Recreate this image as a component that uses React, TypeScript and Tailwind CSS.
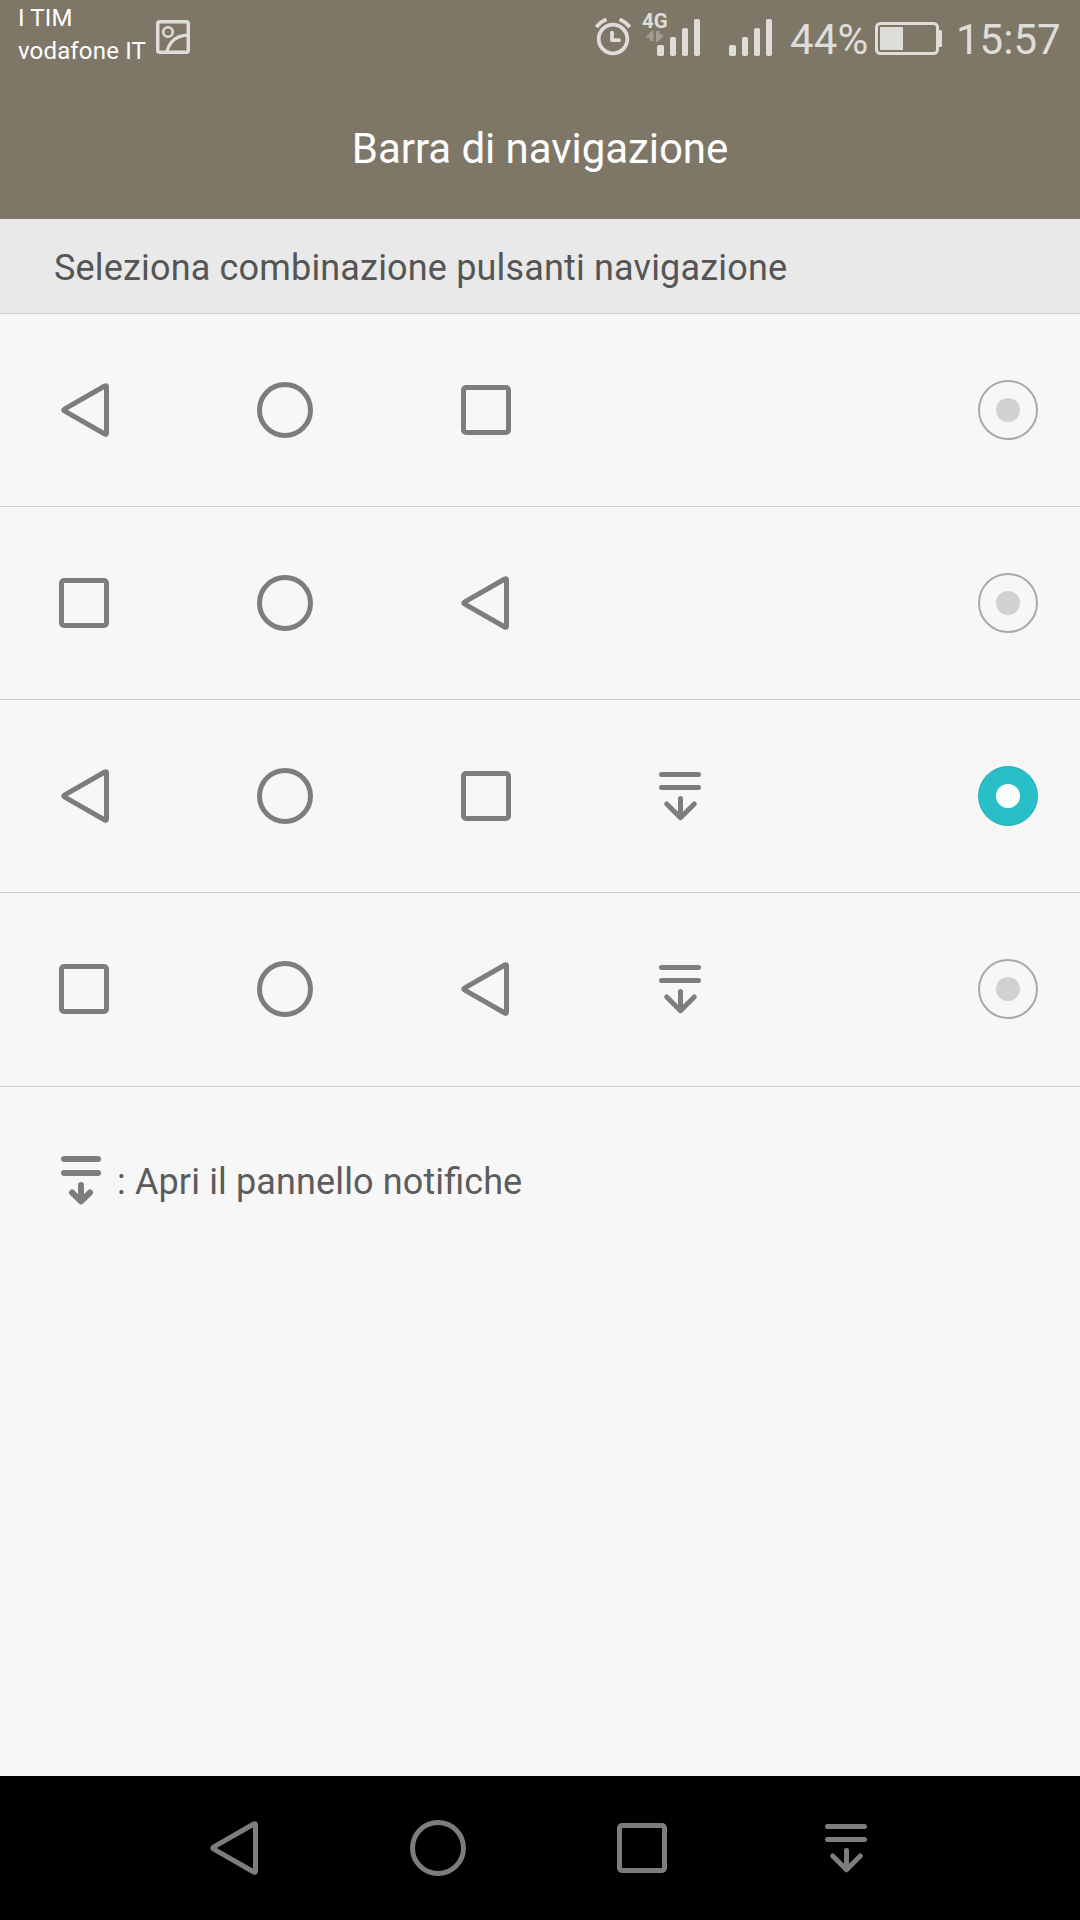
import React from "react";

type IconKind = "back" | "home" | "recent" | "panel";

function NavIcon({ kind }: { kind: IconKind }) {
  return (
    <svg
      width="56"
      height="56"
      viewBox="0 0 56 56"
      fill="none"
      stroke="#7d7d7d"
      strokeWidth="5"
      strokeLinecap="round"
      strokeLinejoin="round"
      className="shrink-0"
    >
      {kind === "back" && <path d="M49.5 4.8Q49.5 3 47.8 4L7.8 26.9Q5.6 28 7.8 29.1L47.8 52Q49.5 53 49.5 51.2Z" />}
      {kind === "home" && <circle cx="28" cy="28" r="25.5" />}
      {kind === "recent" && <path d="M4 8a5 5 0 0 1 5-5h40a5 5 0 0 1 5 5v40a5 5 0 0 1-5 5h-40a5 5 0 0 1-5-5zM9 8v40h40v-40z" fill="#7d7d7d" fillRule="evenodd" stroke="none" />}
      {kind === "panel" && <path d="M9.5 6.5h37M9.5 19.5h37M28.5 30.5v19M14.7 36L28.5 49.7L42.3 36" />}
    </svg>
  );
}

function Radio({ checked }: { checked: boolean }) {
  return (
    <svg width="60" height="60" viewBox="0 0 60 60" className="ml-auto shrink-0">
      {checked ? (
        <>
          <circle cx="30" cy="30" r="29.5" fill="#29bfc8" stroke="#22b2bb" strokeWidth="1" />
          <circle cx="30" cy="30" r="12" fill="#ffffff" />
        </>
      ) : (
        <>
          <circle cx="30" cy="30" r="29" fill="none" stroke="#a9a9a9" strokeWidth="2" />
          <circle cx="30" cy="30" r="12" fill="#d1d1d1" />
        </>
      )}
    </svg>
  );
}

function Option({ icons, checked = false }: { icons: IconKind[]; checked?: boolean }) {
  const [first, second, third, fourth] = icons;
  return (
    <div className="flex h-[193px] items-center border-b border-[#d0d0d0] pr-[42px] last:h-[194px] last:pb-px">
      <div className={first === "recent" ? "ml-[55px] mr-[146px]" : "ml-[57px] mr-[144px]"}>
        <NavIcon kind={first} />
      </div>
      <div className="mr-[144px]"><NavIcon kind={second} /></div>
      <div className="mr-[139px]"><NavIcon kind={third} /></div>
      {fourth && <NavIcon kind={fourth} />}
      <Radio checked={checked} />
    </div>
  );
}

function Signal() {
  return (
    <svg width="43" height="37" viewBox="0 0 43 37" fill="#deddd9" className="shrink-0">
      <rect x="0" y="26" width="7" height="11" rx="1.8" />
      <rect x="13" y="18" width="6" height="19" rx="1.8" />
      <rect x="25" y="9" width="6" height="28" rx="1.8" />
      <rect x="37" y="0" width="6" height="37" rx="1.8" />
    </svg>
  );
}

function StatusBar() {
  return (
    <div className="flex h-[74px] items-start text-[#deddd9]">
      <div className="ml-[18px] mt-[2px] w-[138px] whitespace-nowrap text-[24px] leading-[33px] tracking-[0.16px] text-white">
        <div>I TIM</div>
        <div>vodafone IT</div>
      </div>
      <svg width="34" height="34" viewBox="0 0 34 34" fill="none" stroke="#deddd9" className="mt-[20px] shrink-0">
        <rect x="1.75" y="1.75" width="30.5" height="30.5" rx="2" strokeWidth="3.5" />
        <circle cx="12" cy="12" r="4.8" strokeWidth="2.5" />
        <path d="M10.8 32C13.5 21.5 21 15.5 32 15.2" strokeWidth="3.2" />
      </svg>
      <svg width="36" height="38" viewBox="0 0 36 38" fill="none" stroke="#deddd9" className="ml-[405px] mt-[18px] shrink-0">
        <circle cx="18" cy="21" r="14.3" strokeWidth="3.8" />
        <path d="M17 14.6v7.6h7" strokeWidth="3.8" strokeLinecap="round" strokeLinejoin="round" />
        <path d="M1.3 9Q5 4 11.5 1.3M24.5 1.3Q31 4 34.7 9" strokeWidth="3.8" />
      </svg>
      <div className="relative ml-[26px] mt-[19px] h-[37px] w-[43px]">
        <Signal />
        <span className="absolute -left-[15px] -top-[10px] text-[20.5px] font-bold leading-[24px]">4G</span>
        <svg width="18" height="12" viewBox="0 0 18 12" fill="#a29d92" className="absolute -left-[11px] top-[12px]">
          <path d="M7.5 0V10H3.7V6.7H0V5.6L5.5 0ZM10 0h3.7V3.5H17V5.5L11.5 11H10Z" />
        </svg>
      </div>
      <div className="ml-[29px] mt-[19px]"><Signal /></div>
      <div className="ml-[18px] mt-[15px] w-[85px] whitespace-nowrap text-[42px] leading-[49px] tracking-[0.2px]">44%</div>
      <svg width="67" height="33" viewBox="0 0 67 33" fill="none" className="mt-[22px] shrink-0">
        <rect x="1.5" y="1.5" width="61" height="30" rx="4" stroke="#deddd9" strokeWidth="3" />
        <rect x="5" y="5" width="23" height="23" fill="#deddd9" />
        <path d="M63 8h2.5a1.5 1.5 0 0 1 1.5 1.5v14a1.5 1.5 0 0 1-1.5 1.5H63z" fill="#deddd9" />
      </svg>
      <div className="ml-[14px] mt-[15px] whitespace-nowrap text-[42px] leading-[49px]">15:57</div>
    </div>
  );
}

export default function App() {
  return (
    <div className="flex h-[1920px] w-[1080px] flex-col overflow-hidden bg-[#f7f7f7] font-['Roboto',sans-serif]">
      <header className="h-[219px] bg-[#7e7768]">
        <StatusBar />
        <h1 className="pt-[50px] text-center text-[42px] leading-[49px] tracking-[-0.05px] text-white">Barra di navigazione</h1>
      </header>
      <div className="flex h-[95px] items-center border-b border-[#d0d0d0] bg-[#e9e9e9] pl-[54px] pt-[4px] text-[36px] leading-[42px] tracking-[0.17px] text-[#555555]">
        Seleziona combinazione pulsanti navigazione
      </div>
      <main className="flex-1">
        <div>
          <Option icons={["back", "home", "recent"]} />
          <Option icons={["recent", "home", "back"]} />
          <Option icons={["back", "home", "recent", "panel"]} checked />
          <Option icons={["recent", "home", "back", "panel"]} />
        </div>
        <div className="flex items-start pl-[61px] pt-[69px]">
          <svg width="40" height="50" viewBox="0 0 40 50" fill="none" stroke="#7d7d7d" strokeWidth="6" strokeLinecap="round" strokeLinejoin="round">
            <path d="M3 3h34M3 17h34M20 29v16M11 36.5L20 45.3L29 36.5" />
          </svg>
          <p className="ml-[16px] mt-[5px] text-[36px] leading-[42px] tracking-[0.13px] text-[#5c5c5c]">
            : Apri il pannello noti<span className="tracking-normal">fi</span>che
          </p>
        </div>
      </main>
      <nav className="flex h-[144px] items-center bg-black pl-[206px]">
        <div className="mr-[148px]"><NavIcon kind="back" /></div>
        <div className="mr-[147px]"><NavIcon kind="home" /></div>
        <div className="mr-[149px]"><NavIcon kind="recent" /></div>
        <NavIcon kind="panel" />
      </nav>
    </div>
  );
}
